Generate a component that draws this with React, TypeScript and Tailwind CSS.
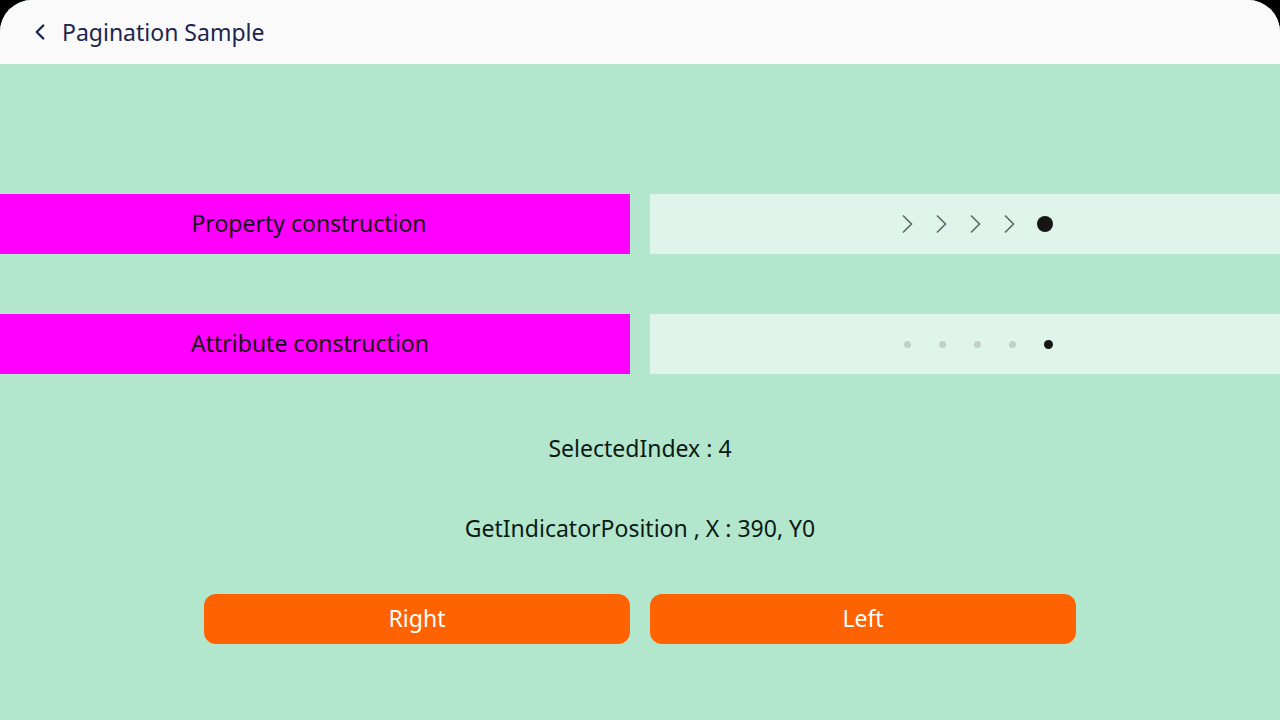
import { ChevronLeft } from "lucide-react";

const Chevron = () => (
  <svg width="12" height="20" viewBox="0 0 12 20" fill="none">
    <path d="M2 1.5 L10.5 10 L2 18.5" stroke="#5f6663" strokeWidth="1.6" />
  </svg>
);

export default function App() {
  return (
    <div className="h-[720px] w-[1280px] bg-black font-['Noto_Sans',sans-serif] overflow-hidden">
      <div className="flex h-full flex-col rounded-t-[32px] bg-[#b2e6cd] overflow-hidden">
        {/* header */}
        <div className="flex h-16 items-center bg-[#fafafa] pl-[27px]">
          <ChevronLeft className="h-[26px] w-[26px] text-[#1c2550]" strokeWidth={2.2} />
          <span className="ml-[9px] text-[23px] text-[#1c2550]">Pagination Sample</span>
        </div>

        <div className="flex flex-col pt-[130px]">
          <div className="flex h-[60px] gap-5">
            <div className="flex w-[630px] items-center justify-center bg-[#ff00ff] pb-[1px] pr-[12px] text-[23px] text-[#141414]">
              Property construction
            </div>
            <div className="flex flex-1 items-center justify-center bg-[#dff5eb]">
              <div className="flex items-center gap-[22px] pl-[24px]">
                <Chevron />
                <Chevron />
                <Chevron />
                <Chevron />
                <span className="h-4 w-4 rounded-full bg-[#161616]" />
              </div>
            </div>
          </div>

          <div className="mt-[60px] flex h-[60px] gap-5">
            <div className="flex w-[630px] items-center justify-center bg-[#ff00ff] pb-[1px] pr-[10px] text-[23px] text-[#141414]">
              Attribute construction
            </div>
            <div className="flex flex-1 items-center justify-center bg-[#dff5eb]">
              <div className="flex items-center gap-[28px] pl-[26px]">
                <span className="h-[7px] w-[7px] rounded-full bg-[#c2d0c9]" />
                <span className="h-[7px] w-[7px] rounded-full bg-[#c2d0c9]" />
                <span className="h-[7px] w-[7px] rounded-full bg-[#c2d0c9]" />
                <span className="h-[7px] w-[7px] rounded-full bg-[#c2d0c9]" />
                <span className="h-[9px] w-[9px] rounded-full bg-[#161616]" />
              </div>
            </div>
          </div>

          <div className="mt-[57px] text-center text-[23px] leading-[34px] text-[#0d1a14]">SelectedIndex : 4</div>
          <div className="mt-[46px] text-center text-[23px] leading-[34px] text-[#0d1a14]">
            GetIndicatorPosition , X : 390, Y0
          </div>

          <div className="mt-[49px] flex justify-center gap-5">
            <button className="h-[50px] w-[426px] rounded-[12px] bg-[#ff6200] pb-[1px] text-[23px] text-white">Right</button>
            <button className="h-[50px] w-[426px] rounded-[12px] bg-[#ff6200] pb-[1px] text-[23px] text-white">Left</button>
          </div>
        </div>
      </div>
    </div>
  );
}
